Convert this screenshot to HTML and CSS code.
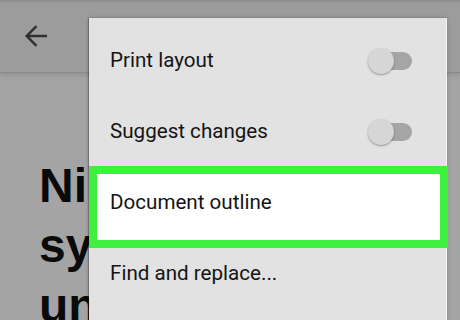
FILE: index.html
```html
<!DOCTYPE html>
<html>
<head>
<meta charset="utf-8">
<link rel="stylesheet" href="styles.css">
</head>
<body>
<div class="screen">
  <header class="appbar">
    <svg class="back" width="22" height="22" viewBox="4 4 16 16" aria-hidden="true">
      <path d="M20 11.1H7.4l5.6-5.6-1.3-1.3L4 12l7.7 7.8 1.3-1.3-5.6-5.6H20z" fill="#303030"/>
    </svg>
  </header>
  <main class="content">
    <h1 class="title">Nine<br>sync<br>under</h1>
  </main>
  <div class="menu">
    <div class="item">
      <span class="label">Print layout</span>
      <span class="toggle"><span class="track"></span><span class="thumb"></span></span>
    </div>
    <div class="item">
      <span class="label">Suggest changes</span>
      <span class="toggle"><span class="track"></span><span class="thumb"></span></span>
    </div>
    <div class="item highlight">
      <span class="label">Document outline</span>
    </div>
    <div class="item">
      <span class="label">Find and replace...</span>
    </div>
  </div>
</div>
</body>
</html>
```
FILE: styles.css
```css
html, body {
  margin: 0;
  padding: 0;
}
body {
  width: 460px;
  height: 320px;
  overflow: hidden;
  background: #a3a3a3;
}
.screen {
  position: relative;
  width: 460px;
  height: 320px;
  overflow: hidden;
  background: #a4a4a4;
}
.appbar {
  height: 72px;
  box-sizing: border-box;
  border-top: 2px solid #8f8f8f;
  background: #9c9c9c;
  display: flex;
  align-items: center;
  padding-left: 25px;
  box-shadow: 0 1px 0 #8a8a8a, 0 3px 5px rgba(0,0,0,0.12);
  position: relative;
  z-index: 1;
}
.back {
  display: block;
  margin-top: -2px;
}
.content {
  padding: 84px 0 0 39px;
}
.title {
  margin: 0;
  font-family: "Liberation Sans", Arial, sans-serif;
  font-weight: bold;
  font-size: 48px;
  line-height: 60px;
  color: #0a0a0a;
  white-space: nowrap;
}
.menu {
  position: absolute;
  left: 89px;
  top: 18px;
  width: 357px;
  height: 320px;
  background: #e2e2e2;
  border-right: 1px solid #f4f4f4;
  box-shadow: -1px 0 1px rgba(0,0,0,0.25), 0 0 4px rgba(0,0,0,0.2);
  padding-top: 7px;
  z-index: 2;
}
.item {
  position: relative;
  height: 71px;
  display: flex;
  align-items: center;
  justify-content: space-between;
  padding: 0 34px 0 21px;
  font-family: Roboto, "Noto Sans", sans-serif;
  font-size: 20.6px;
  color: #141414;
}
.label {
  line-height: 71px;
}
.highlight::before {
  content: "";
  position: absolute;
  left: 0;
  right: -2px;
  top: -1px;
  height: 82px;
  box-sizing: border-box;
  border: 8px solid #3ff03f;
  background: #ffffff;
  z-index: -1;
}
.toggle {
  position: relative;
  width: 44px;
  height: 26px;
  display: block;
}
.track {
  position: absolute;
  right: 0;
  top: 4px;
  width: 30px;
  height: 18px;
  border-radius: 9px;
  background: #a5a5a5;
}
.thumb {
  position: absolute;
  left: 0;
  top: 0;
  width: 26px;
  height: 26px;
  border-radius: 50%;
  background: #d6d6d6;
  box-shadow: 0 1px 2px rgba(0,0,0,0.35);
}
```
